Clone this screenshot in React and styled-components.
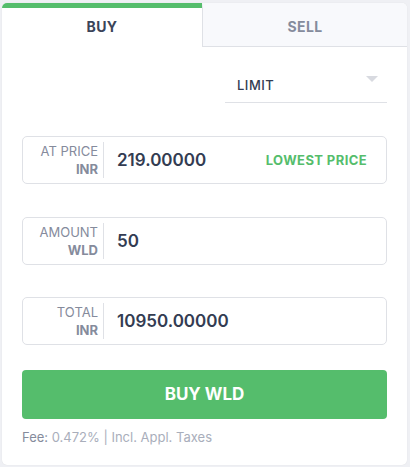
import React, { useState } from "react";
import styled, { createGlobalStyle } from "styled-components";

const GlobalStyle = createGlobalStyle`
  html, body {
    margin: 0;
    padding: 0;
    background: #eff0f4;
    font-family: Inter, "Noto Sans", sans-serif;
  }
`;

const fields = [
  { label: "AT PRICE", unit: "INR", value: "219.00000", extra: "LOWEST PRICE" },
  { label: "AMOUNT", unit: "WLD", value: "50" },
  { label: "TOTAL", unit: "INR", value: "10950.00000" },
];

export default function App() {
  const [tab, setTab] = useState("buy");

  return (
    <>
      <GlobalStyle />
      <Page>
        <Card>
          <Tabs>
            <Tab active={tab === "buy"} onClick={() => setTab("buy")}>
              BUY
            </Tab>
            <Tab active={tab === "sell"} onClick={() => setTab("sell")}>
              SELL
            </Tab>
          </Tabs>
          <Body>
            <SelectRow>
              <Select>
                <span>LIMIT</span>
                <Caret />
              </Select>
            </SelectRow>
            {fields.map((f) => (
              <Field key={f.label}>
                <Label>
                  <span>{f.label}</span>
                  <b>{f.unit}</b>
                </Label>
                <Value>{f.value}</Value>
                {f.extra && <Extra>{f.extra}</Extra>}
              </Field>
            ))}
            <BuyButton>BUY WLD</BuyButton>
            <Fee>
              Fee: <span>0.472% | Incl. Appl. Taxes</span>
            </Fee>
          </Body>
        </Card>
      </Page>
    </>
  );
}

const Page = styled.div`
  padding: 3px 3px 2px 2px;
  height: 467px;
  box-sizing: border-box;
`;

const Card = styled.div`
  background: #ffffff;
  border-radius: 5px;
  height: 100%;
  overflow: hidden;
  box-shadow: 0 0 1px rgba(0, 0, 0, 0.12);
`;

const Tabs = styled.div`
  display: grid;
  grid-template-columns: 200px 1fr;
  height: 44px;
`;

const Tab = styled.div`
  display: flex;
  align-items: center;
  justify-content: center;
  font-size: 14px;
  font-weight: 700;
  letter-spacing: 0.4px;
  cursor: pointer;
  box-sizing: border-box;
  color: ${(p) => (p.active ? "#3b4459" : "#858b9c")};
  background: ${(p) => (p.active ? "#ffffff" : "#f8f9fc")};
  border-top: 5px solid ${(p) => (p.active ? "#55bd6c" : "transparent")};
  border-bottom: 1px solid ${(p) => (p.active ? "transparent" : "#dfe1e6")};
  border-left: ${(p) => (p.active ? "none" : "1px solid #dfe1e6")};
  padding-bottom: 2px;
`;

const Body = styled.div`
  padding: 20px 20px 0 20px;
  display: flex;
  flex-direction: column;
`;

const SelectRow = styled.div`
  display: flex;
  justify-content: flex-end;
  margin-bottom: 33px;
`;

const Select = styled.div`
  width: 162px;
  height: 36px;
  box-sizing: border-box;
  border-bottom: 1px solid #dfe1e6;
  display: flex;
  align-items: center;
  justify-content: space-between;
  padding: 0 9px 0 12px;
  font-size: 13px;
  font-weight: 500;
  letter-spacing: 0.5px;
  color: #333c52;
`;

const Caret = styled.div`
  width: 0;
  height: 0;
  border-left: 6px solid transparent;
  border-right: 6px solid transparent;
  border-top: 6px solid #d8dae0;
  margin-top: -12px;
`;

const Field = styled.div`
  display: flex;
  align-items: center;
  height: 48px;
  box-sizing: border-box;
  border: 1px solid #dfe1e6;
  border-radius: 5px;
  margin-bottom: 32.5px;
  padding-right: 19px;
`;

const Label = styled.div`
  width: 75px;
  height: 36px;
  display: flex;
  flex-direction: column;
  align-items: flex-end;
  justify-content: center;
  padding-right: 5px;
  border-right: 1px solid #dfe1e6;
  font-size: 13px;
  line-height: 18px;
  color: #858b9c;

  b {
    font-weight: 700;
  }
`;

const Value = styled.div`
  flex: 1;
  padding-left: 13px;
  font-size: 17px;
  font-weight: 600;
  color: #333c52;
`;

const Extra = styled.div`
  font-size: 13px;
  font-weight: 700;
  letter-spacing: 0.4px;
  color: #55bd6c;
`;

const BuyButton = styled.button`
  margin-top: -8px;
  height: 49px;
  border: none;
  border-radius: 4px;
  background: #55bd6c;
  color: #ffffff;
  font-family: inherit;
  font-size: 17px;
  font-weight: 700;
  cursor: pointer;
`;

const Fee = styled.div`
  margin-top: 10px;
  font-size: 13px;
  color: #858b9c;

  span {
    color: #a9aebb;
  }
`;
